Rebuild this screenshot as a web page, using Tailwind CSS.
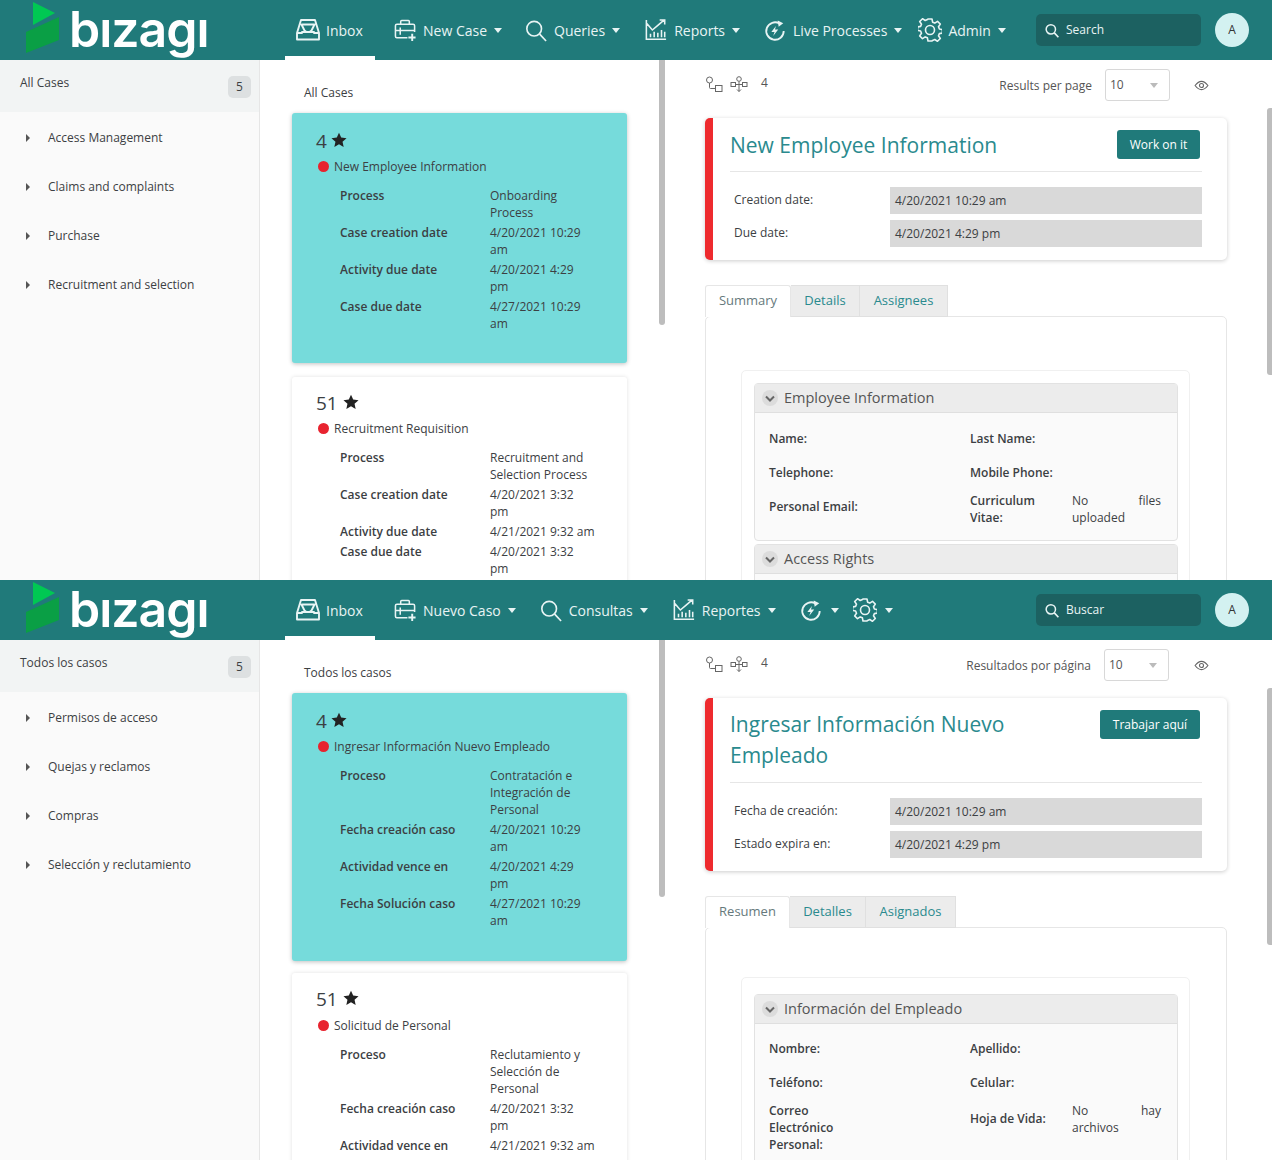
<!DOCTYPE html>
<html lang="en">
<head>
    <meta charset="UTF-8">
    <meta name="viewport" content="width=device-width, initial-scale=1.0">
    <script src="https://cdn.jsdelivr.net/npm/@tailwindcss/browser@4"></script>
    <title>Bizagi Inbox</title>
</head>
<body class="bg-white font-['Open_Sans',sans-serif] text-[12px] text-[#3c4043]">
    <!-- shared icons -->
    <svg class="hidden" xmlns="http://www.w3.org/2000/svg">
        <symbol id="i-inbox" viewBox="0 0 24 24"><path d="M1 15 5 2h14l4 13v6.500H1z M1 15h5l0-1h12v1h5 M5.500 6.500h13l-3 6-2 1.500h-3l-2-1.500z" fill="none" stroke="currentColor" stroke-width="1.900" stroke-linejoin="round"/></symbol>
        <symbol id="i-case" viewBox="0 0 24 24"><path d="M14 20H3q-1.500 0-1.500-1.500V7.500Q1.500 6 3 6h17q1.500 0 1.500 1.500V14 M1.500 12.500h20 M7 6V3q0-1 1-1h7q1 0 1 1v3 M6.500 9.500v7.500" fill="none" stroke="currentColor" stroke-width="1.600"/><path d="M19 16v7.500 M15 19.750h7.500" fill="none" stroke="currentColor" stroke-width="2"/></symbol>
        <symbol id="i-search" viewBox="0 0 24 24"><circle cx="10" cy="10" r="8" fill="none" stroke="currentColor" stroke-width="1.800"/><path d="m16 16 7 7.500" fill="none" stroke="currentColor" stroke-width="1.800"/></symbol>
        <symbol id="i-search-sm" viewBox="0 0 24 24"><circle cx="10" cy="10" r="8" fill="none" stroke="currentColor" stroke-width="2.600"/><path d="m16 16 7 7.500" fill="none" stroke="currentColor" stroke-width="2.800"/></symbol>
        <symbol id="i-chart" viewBox="0 0 24 24"><path d="M1.500 1v21h21.500 M2 5l6 7 6-5 7-6 M16 1h5.500v5 M6 20v-4 M10 20v-6 M14 20v-5 M18 20v-8 M21.500 20v-6" fill="none" stroke="currentColor" stroke-width="1.700"/></symbol>
        <symbol id="i-live" viewBox="0 0 24 24"><path d="M17 4.500a9.500 9.500 0 1 0 4.500 8" fill="none" stroke="currentColor" stroke-width="2"/><path d="m15 1 6 3-5 4z" fill="currentColor"/><path d="M13 7 8 13.500h3.500L10 18l5.500-7H12z" fill="currentColor"/></symbol>
        <symbol id="i-gear" viewBox="0 0 24 24"><path d="M10 1h4l.600 3.200 2.200.900L19.500 3.300l2.800 2.800-1.800 2.700.900 2.200 3 .600v3.400l-3 .600-.900 2.200 1.800 2.700-2.800 2.800-2.700-1.800-2.200.900L14 23h-4l-.600-3.200-2.200-.900-2.700 1.800-2.800-2.800 1.800-2.700-.900-2.200-3-.600v-3.400l3-.600.900-2.200-1.800-2.700 2.800-2.800 2.700 1.800 2.200-.900z" fill="none" stroke="currentColor" stroke-width="1.600" stroke-linejoin="round"/><circle cx="12" cy="12" r="4.500" fill="none" stroke="currentColor" stroke-width="1.600"/></symbol>
        <symbol id="i-caret" viewBox="0 0 8 5"><path d="M0 0h8L4 5z" fill="currentColor"/></symbol>
        <symbol id="i-star" viewBox="0 0 24 24"><path d="m12 1 3.300 7.400 8 .800-6 5.400 1.700 7.900-7-4-7 4 1.700-7.900-6-5.400 8-.800z" fill="currentColor"/></symbol>
        <symbol id="i-flow" viewBox="0 0 18 17"><circle cx="4.500" cy="4" r="3" fill="none" stroke="currentColor"/><path d="M4.500 7v4.500q0 1 1 1H10" fill="none" stroke="currentColor"/><rect x="10.500" y="9.500" width="6.500" height="6" fill="none" stroke="currentColor"/></symbol>
        <symbol id="i-tree" viewBox="0 0 18 17"><circle cx="9" cy="3" r="2.300" fill="none" stroke="currentColor"/><rect x="1" y="6.500" width="4.500" height="4" fill="none" stroke="currentColor"/><rect x="12.500" y="6.500" width="4.500" height="4" fill="none" stroke="currentColor"/><path d="M9 5.500v10 M5.500 8.500h7 M7 13.500l2 2 2-2" fill="none" stroke="currentColor"/></symbol>
        <symbol id="i-eye" viewBox="0 0 16 12"><path d="M1 6q7-9 14 0-7 9-14 0z" fill="none" stroke="currentColor" stroke-width="1.200"/><circle cx="8" cy="6" r="2.200" fill="none" stroke="currentColor" stroke-width="1.200"/></symbol>
        <symbol id="i-logo" viewBox="0 0 36 54"><path d="M8 2 30 13 8 25z" fill="#00c853"/><path d="M34 17v23L1 53V32z" fill="#0a9f45"/></symbol>
        <symbol id="i-chev" viewBox="0 0 16 16"><circle cx="8" cy="8" r="8" fill="#dcdcdc"/><path d="M4 6.500 8 10.500l4-4" fill="none" stroke="#666" stroke-width="2"/></symbol>
    </svg>

    <!-- English -->
    <section class="relative h-[580px] overflow-hidden">
        <header class="h-[60px] bg-[#207a7a] flex items-center text-[#e8f4f4] text-[14px]">
            <div class="w-[285px] h-full flex pl-[25px] items-start">
                <svg class="w-[36px] h-[54px]"><use href="#i-logo"/></svg>
                <span class="ml-[8px] text-white font-['Inter',sans-serif] font-semibold text-[50px] leading-[58px] tracking-[-1px]">bızagı</span>
            </div>
            <a class="w-[90px] h-full flex items-center pl-[11px] gap-[6px] border-b-[4px] border-white pt-[4px]"><svg class="w-[24px] h-[24px]"><use href="#i-inbox"/></svg>Inbox</a>
            <a class="ml-[19px] flex items-center gap-[6px]"><svg class="w-[23px] h-[24px]"><use href="#i-case"/></svg>New Case<svg class="w-[8px] h-[5px] ml-[1px]"><use href="#i-caret"/></svg></a>
            <a class="ml-[23px] flex items-center gap-[7px]"><svg class="w-[22px] h-[23px]"><use href="#i-search"/></svg>Queries<svg class="w-[8px] h-[5px]"><use href="#i-caret"/></svg></a>
            <a class="ml-[25px] flex items-center gap-[7px]"><svg class="w-[22px] h-[24px]"><use href="#i-chart"/></svg>Reports<svg class="w-[8px] h-[5px]"><use href="#i-caret"/></svg></a>
            <a class="ml-[24px] flex items-center gap-[7px]"><svg class="w-[22px] h-[23px]"><use href="#i-live"/></svg>Live Processes<svg class="w-[8px] h-[5px]"><use href="#i-caret"/></svg></a>
            <a class="ml-[16px] flex items-center gap-[6px]"><svg class="w-[24px] h-[24px]"><use href="#i-gear"/></svg>Admin<svg class="w-[8px] h-[5px] ml-[1px]"><use href="#i-caret"/></svg></a>
            <div class="absolute left-[1036px] top-[14px] w-[165px] h-[32px] bg-[#1c6161] rounded-[5px] flex items-center pl-[9px] gap-[7px] text-[12px]"><svg class="w-[14px] h-[15px]"><use href="#i-search-sm"/></svg>Search</div>
            <div class="absolute left-[1215px] top-[13px] w-[34px] h-[34px] rounded-full bg-[#d3f1f1] text-[#333] text-[12px] flex items-center justify-center">A</div>
        </header>
        <div class="flex h-[520px]">
            <aside class="w-[260px] shrink-0 bg-[#fafafa] border-r border-[#e6e6e6]">
                <div class="h-[52px] bg-[#f2f4f4] pl-[20px] pr-[8px] pt-[14px] flex justify-between items-start">
                    <span>All Cases</span>
                    <span class="w-[23px] h-[22px] mt-[2px] rounded-[5px] bg-[#dde0e1] flex items-center justify-center">5</span>
                </div>
                <ul class="pt-[1px]">
                    <li class="h-[49px] flex items-center pl-[26px] gap-[18px]"><span class="w-0 h-0 border-y-[4px] border-y-transparent border-l-[4px] border-l-[#555]"></span>Access Management</li>
                    <li class="h-[49px] flex items-center pl-[26px] gap-[18px]"><span class="w-0 h-0 border-y-[4px] border-y-transparent border-l-[4px] border-l-[#555]"></span>Claims and complaints</li>
                    <li class="h-[49px] flex items-center pl-[26px] gap-[18px]"><span class="w-0 h-0 border-y-[4px] border-y-transparent border-l-[4px] border-l-[#555]"></span>Purchase</li>
                    <li class="h-[49px] flex items-center pl-[26px] gap-[18px]"><span class="w-0 h-0 border-y-[4px] border-y-transparent border-l-[4px] border-l-[#555]"></span>Recruitment and selection</li>
                </ul>
            </aside>
            <main class="relative w-[410px] shrink-0 pl-[32px] pt-[24px]">
                <p class="pl-[12px] h-[29px] leading-[17px]">All Cases</p>
                <article class="w-[335px] h-[250px] bg-[#76dbdb] rounded-[3px] shadow-[0_1px_4px_rgba(0,0,0,0.25)] pl-[24px] pt-[16px]">
                    <div class="flex items-center h-[24px] text-[19px]">4<svg class="w-[16px] h-[16px] ml-[4px] text-[#222] mt-[-2px]"><use href="#i-star"/></svg></div>
                    <div class="flex items-center h-[17px] mt-[5px]"><span class="w-[11px] h-[11px] ml-[2px] rounded-full bg-[#e8232f]"></span><span class="ml-[5px]">New Employee Information</span></div>
                    <dl class="mt-[12px] pl-[24px] grid grid-cols-[150px_1fr] gap-y-[3px] leading-[17px]">
                        <dt class="font-semibold">Process</dt><dd>Onboarding<br>Process</dd>
                        <dt class="font-semibold">Case creation date</dt><dd>4/20/2021 10:29<br>am</dd>
                        <dt class="font-semibold">Activity due date</dt><dd>4/20/2021 4:29<br>pm</dd>
                        <dt class="font-semibold">Case due date</dt><dd>4/27/2021 10:29<br>am</dd>
                    </dl>
                </article>
                <article class="w-[335px] h-[260px] mt-[14px] bg-white rounded-[3px] shadow-[0_0_4px_rgba(0,0,0,0.12)] pl-[24px] pt-[14px]">
                    <div class="flex items-center h-[24px] text-[19px]">51<svg class="w-[16px] h-[16px] ml-[5px] text-[#222] mt-[-2px]"><use href="#i-star"/></svg></div>
                    <div class="flex items-center h-[17px] mt-[5px]"><span class="w-[11px] h-[11px] ml-[2px] rounded-full bg-[#e8232f]"></span><span class="ml-[5px]">Recruitment Requisition</span></div>
                    <dl class="mt-[12px] pl-[24px] grid grid-cols-[150px_1fr] gap-y-[3px] leading-[17px]">
                        <dt class="font-semibold">Process</dt><dd>Recruitment and<br>Selection Process</dd>
                        <dt class="font-semibold">Case creation date</dt><dd>4/20/2021 3:32<br>pm</dd>
                        <dt class="font-semibold">Activity due date</dt><dd>4/21/2021 9:32 am</dd>
                        <dt class="font-semibold">Case due date</dt><dd>4/20/2021 3:32<br>pm</dd>
                    </dl>
                </article>
                <div class="absolute left-[399px] top-0 w-[6px] h-[265px] bg-[#bdbdbd] rounded-b-[3px]"></div>
            </main>
            <div class="relative flex-1 pl-[35px] pt-[9px]">
                <div class="flex items-center h-[32px] w-[522px] text-[#555]">
                    <svg class="w-[18px] h-[17px] mt-[-1px] text-[#666]"><use href="#i-flow"/></svg>
                    <svg class="w-[18px] h-[17px] ml-[7px] mt-[-1px] text-[#666]"><use href="#i-tree"/></svg>
                    <span class="ml-[13px] mt-[-4px]">4</span>
                    <span class="ml-auto mt-[1px]">Results per page</span>
                    <span class="ml-[13px] w-[65px] h-[32px] border border-[#d8d8d8] rounded-[3px] flex items-center justify-between pl-[4px] pr-[10px]">10<svg class="w-[10px] h-[5px] text-[#bbb]"><use href="#i-caret"/></svg></span>
                    <svg class="ml-[24px] w-[15px] h-[11px] mr-[18px] text-[#666]"><use href="#i-eye"/></svg>
                </div>
                <div class="mt-[17px] w-[522px] h-[142px] bg-white rounded-[5px] border-l-[8px] border-[#ee2a2e] shadow-[0_1px_4px_rgba(0,0,0,0.2)] pl-[17px] pr-[25px]">
                    <div class="flex justify-between items-center h-[54px] border-b border-[#e6e6e6]">
                        <h2 class="text-[21px] text-[#2a8a8e] leading-[30px]">New Employee Information</h2>
                        <button class="mr-[2px] w-[83px] h-[29px] bg-[#207a7a] text-white rounded-[3px]">Work on it</button>
                    </div>
                    <div class="mt-[15px] flex items-center h-[27px]"><span class="w-[160px] pl-[4px] mt-[-1px]">Creation date:</span><span class="flex-1 h-full bg-[#d9d9d9] pl-[5px] flex items-center">4/20/2021 10:29 am</span></div>
                    <div class="mt-[6px] flex items-center h-[27px]"><span class="w-[160px] pl-[4px] mt-[-1px]">Due date:</span><span class="flex-1 h-full bg-[#d9d9d9] pl-[5px] flex items-center">4/20/2021 4:29 pm</span></div>
                </div>
                <div class="mt-[25px] flex h-[32px] text-[13px] relative z-10">
                    <span class="w-[86px] pb-[2px] bg-white border border-b-0 border-[#e6e6e6] rounded-t-[3px] flex items-center justify-center text-[#66797c]">Summary</span>
                    <span class="w-[69px] bg-[#ececec] border border-[#e0e0e0] border-l-0 flex items-center justify-center text-[#2a8a8e]">Details</span>
                    <span class="w-[88px] bg-[#ececec] border border-[#e0e0e0] border-l-0 flex items-center justify-center text-[#2a8a8e]">Assignees</span>
                </div>
                <div class="w-[522px] h-[400px] border border-[#e6e6e6] rounded-[5px] mt-[-1px] pl-[35px] pt-[53px]">
                    <div class="w-[449px] h-[300px] border border-[#f0f0f0] rounded-[5px] pl-[12px] pt-[12px]">
                        <div class="w-[424px] rounded-[4px] border border-[#e2e2e2] bg-[#fafafa]">
                            <div class="h-[29px] bg-[#ececec] border-b border-[#dfdfdf] flex items-center pl-[7px] gap-[6px] text-[14.500px] text-[#555]"><svg class="w-[16px] h-[16px]"><use href="#i-chev"/></svg>Employee Information</div>
                            <div class="h-[127px] font-semibold">
                                <dl class="grid grid-cols-[201px_102px_89px] pl-[14px] pt-[17px] auto-rows-[34px] leading-[17px]">
                                    <dt>Name:</dt><dt class="col-span-2">Last Name:</dt>
                                    <dt>Telephone:</dt><dt class="col-span-2">Mobile Phone:</dt>
                                    <dt>Personal Email:</dt><dt class="mt-[-6px]">Curriculum<br>Vitae:</dt><dd class="mt-[-6px] font-normal flex flex-col"><span class="flex justify-between"><span>No</span><span>files</span></span>uploaded</dd>
                                </dl>
                            </div>
                        </div>
                        <div class="w-[424px] mt-[3px] rounded-t-[4px] border border-[#e2e2e2] bg-[#fafafa]">
                            <div class="h-[29px] bg-[#ececec] border-b border-[#dfdfdf] flex items-center pl-[7px] gap-[6px] text-[14.500px] text-[#555]"><svg class="w-[16px] h-[16px]"><use href="#i-chev"/></svg>Access Rights</div>
                            <div class="h-[20px]"></div>
                        </div>
                    </div>
                </div>
                <div class="absolute right-0 top-[48px] w-[5px] h-[267px] bg-[#bdbdbd] rounded-l-[3px]"></div>
            </div>
        </div>
    </section>

    <!-- Spanish -->
    <section class="relative h-[580px] overflow-hidden">
        <header class="h-[60px] bg-[#207a7a] flex items-center text-[#e8f4f4] text-[14px]">
            <div class="w-[285px] h-full flex pl-[25px] items-start">
                <svg class="w-[36px] h-[54px]"><use href="#i-logo"/></svg>
                <span class="ml-[8px] text-white font-['Inter',sans-serif] font-semibold text-[50px] leading-[58px] tracking-[-1px]">bızagı</span>
            </div>
            <a class="w-[90px] h-full flex items-center pl-[11px] gap-[6px] border-b-[4px] border-white pt-[4px]"><svg class="w-[24px] h-[24px]"><use href="#i-inbox"/></svg>Inbox</a>
            <a class="ml-[19px] flex items-center gap-[6px]"><svg class="w-[23px] h-[24px]"><use href="#i-case"/></svg>Nuevo Caso<svg class="w-[8px] h-[5px] ml-[1px]"><use href="#i-caret"/></svg></a>
            <a class="ml-[24px] flex items-center gap-[7px]"><svg class="w-[22px] h-[23px]"><use href="#i-search"/></svg>Consultas<svg class="w-[8px] h-[5px]"><use href="#i-caret"/></svg></a>
            <a class="ml-[25px] flex items-center gap-[7px]"><svg class="w-[22px] h-[24px]"><use href="#i-chart"/></svg>Reportes<svg class="w-[8px] h-[5px]"><use href="#i-caret"/></svg></a>
            <a class="ml-[24px] flex items-center gap-[9px]"><svg class="w-[22px] h-[23px]"><use href="#i-live"/></svg><svg class="w-[8px] h-[5px]"><use href="#i-caret"/></svg></a>
            <a class="ml-[14px] flex items-center gap-[8px]"><svg class="w-[24px] h-[24px]"><use href="#i-gear"/></svg><svg class="w-[8px] h-[5px]"><use href="#i-caret"/></svg></a>
            <div class="absolute left-[1036px] top-[14px] w-[165px] h-[32px] bg-[#1c6161] rounded-[5px] flex items-center pl-[9px] gap-[7px] text-[12px]"><svg class="w-[14px] h-[15px]"><use href="#i-search-sm"/></svg>Buscar</div>
            <div class="absolute left-[1215px] top-[13px] w-[34px] h-[34px] rounded-full bg-[#d3f1f1] text-[#333] text-[12px] flex items-center justify-center">A</div>
        </header>
        <div class="flex h-[520px]">
            <aside class="w-[260px] shrink-0 bg-[#fafafa] border-r border-[#e6e6e6]">
                <div class="h-[52px] bg-[#f2f4f4] pl-[20px] pr-[8px] pt-[14px] flex justify-between items-start">
                    <span>Todos los casos</span>
                    <span class="w-[23px] h-[22px] mt-[2px] rounded-[5px] bg-[#dde0e1] flex items-center justify-center">5</span>
                </div>
                <ul class="pt-[1px]">
                    <li class="h-[49px] flex items-center pl-[26px] gap-[18px]"><span class="w-0 h-0 border-y-[4px] border-y-transparent border-l-[4px] border-l-[#555]"></span>Permisos de acceso</li>
                    <li class="h-[49px] flex items-center pl-[26px] gap-[18px]"><span class="w-0 h-0 border-y-[4px] border-y-transparent border-l-[4px] border-l-[#555]"></span>Quejas y reclamos</li>
                    <li class="h-[49px] flex items-center pl-[26px] gap-[18px]"><span class="w-0 h-0 border-y-[4px] border-y-transparent border-l-[4px] border-l-[#555]"></span>Compras</li>
                    <li class="h-[49px] flex items-center pl-[26px] gap-[18px]"><span class="w-0 h-0 border-y-[4px] border-y-transparent border-l-[4px] border-l-[#555]"></span>Selección y reclutamiento</li>
                </ul>
            </aside>
            <main class="relative w-[410px] shrink-0 pl-[32px] pt-[24px]">
                <p class="pl-[12px] h-[29px] leading-[17px]">Todos los casos</p>
                <article class="w-[335px] h-[268px] bg-[#76dbdb] rounded-[3px] shadow-[0_1px_4px_rgba(0,0,0,0.25)] pl-[24px] pt-[16px]">
                    <div class="flex items-center h-[24px] text-[19px]">4<svg class="w-[16px] h-[16px] ml-[4px] text-[#222] mt-[-2px]"><use href="#i-star"/></svg></div>
                    <div class="flex items-center h-[17px] mt-[5px]"><span class="w-[11px] h-[11px] ml-[2px] rounded-full bg-[#e8232f]"></span><span class="ml-[5px]">Ingresar Información Nuevo Empleado</span></div>
                    <dl class="mt-[12px] pl-[24px] grid grid-cols-[150px_1fr] gap-y-[3px] leading-[17px]">
                        <dt class="font-semibold">Proceso</dt><dd>Contratación e<br>Integración de<br>Personal</dd>
                        <dt class="font-semibold">Fecha creación caso</dt><dd>4/20/2021 10:29<br>am</dd>
                        <dt class="font-semibold">Actividad vence en</dt><dd>4/20/2021 4:29<br>pm</dd>
                        <dt class="font-semibold">Fecha Solución caso</dt><dd>4/27/2021 10:29<br>am</dd>
                    </dl>
                </article>
                <article class="w-[335px] h-[260px] mt-[12px] bg-white rounded-[3px] shadow-[0_0_4px_rgba(0,0,0,0.12)] pl-[24px] pt-[14px]">
                    <div class="flex items-center h-[24px] text-[19px]">51<svg class="w-[16px] h-[16px] ml-[5px] text-[#222] mt-[-2px]"><use href="#i-star"/></svg></div>
                    <div class="flex items-center h-[17px] mt-[6px]"><span class="w-[11px] h-[11px] ml-[2px] rounded-full bg-[#e8232f]"></span><span class="ml-[5px]">Solicitud de Personal</span></div>
                    <dl class="mt-[12px] pl-[24px] grid grid-cols-[150px_1fr] gap-y-[3px] leading-[17px]">
                        <dt class="font-semibold">Proceso</dt><dd>Reclutamiento y<br>Selección de<br>Personal</dd>
                        <dt class="font-semibold">Fecha creación caso</dt><dd>4/20/2021 3:32<br>pm</dd>
                        <dt class="font-semibold">Actividad vence en</dt><dd>4/21/2021 9:32 am</dd>
                    </dl>
                </article>
                <div class="absolute left-[399px] top-0 w-[6px] h-[257px] bg-[#bdbdbd] rounded-b-[3px]"></div>
            </main>
            <div class="relative flex-1 pl-[35px] pt-[9px]">
                <div class="flex items-center h-[32px] w-[522px] text-[#555]">
                    <svg class="w-[18px] h-[17px] mt-[-1px] text-[#666]"><use href="#i-flow"/></svg>
                    <svg class="w-[18px] h-[17px] ml-[7px] mt-[-1px] text-[#666]"><use href="#i-tree"/></svg>
                    <span class="ml-[13px] mt-[-4px]">4</span>
                    <span class="ml-auto mt-[1px]">Resultados por página</span>
                    <span class="ml-[13px] w-[65px] h-[32px] border border-[#d8d8d8] rounded-[3px] flex items-center justify-between pl-[4px] pr-[10px]">10<svg class="w-[10px] h-[5px] text-[#bbb]"><use href="#i-caret"/></svg></span>
                    <svg class="ml-[25px] w-[15px] h-[11px] mr-[18px] text-[#666]"><use href="#i-eye"/></svg>
                </div>
                <div class="mt-[17px] w-[522px] h-[173px] bg-white rounded-[5px] border-l-[8px] border-[#ee2a2e] shadow-[0_1px_4px_rgba(0,0,0,0.2)] pl-[17px] pr-[25px]">
                    <div class="flex justify-between items-start h-[85px] pt-[12px] border-b border-[#e6e6e6]">
                        <h2 class="text-[21px] text-[#2a8a8e] leading-[31px] w-[320px] mt-[-1px]">Ingresar Información Nuevo Empleado</h2>
                        <button class="mr-[2px] w-[100px] h-[29px] bg-[#207a7a] text-white rounded-[3px]">Trabajar aquí</button>
                    </div>
                    <div class="mt-[15px] flex items-center h-[27px]"><span class="w-[160px] pl-[4px] mt-[-1px]">Fecha de creación:</span><span class="flex-1 h-full bg-[#d9d9d9] pl-[5px] flex items-center">4/20/2021 10:29 am</span></div>
                    <div class="mt-[6px] flex items-center h-[27px]"><span class="w-[160px] pl-[4px] mt-[-1px]">Estado expira en:</span><span class="flex-1 h-full bg-[#d9d9d9] pl-[5px] flex items-center">4/20/2021 4:29 pm</span></div>
                </div>
                <div class="mt-[25px] flex h-[32px] text-[13px] relative z-10">
                    <span class="w-[85px] pb-[2px] bg-white border border-b-0 border-[#e6e6e6] rounded-t-[3px] flex items-center justify-center text-[#66797c]">Resumen</span>
                    <span class="w-[76px] bg-[#ececec] border border-[#e0e0e0] border-l-0 flex items-center justify-center text-[#2a8a8e]">Detalles</span>
                    <span class="w-[90px] bg-[#ececec] border border-[#e0e0e0] border-l-0 flex items-center justify-center text-[#2a8a8e]">Asignados</span>
                </div>
                <div class="w-[522px] h-[400px] border border-[#e6e6e6] rounded-[5px] mt-[-1px] pl-[35px] pt-[49px]">
                    <div class="w-[449px] h-[300px] border border-[#f0f0f0] rounded-[5px] pl-[12px] pt-[16px]">
                        <div class="w-[424px] rounded-[4px] border border-[#e2e2e2] bg-[#fafafa]">
                            <div class="h-[29px] bg-[#ececec] border-b border-[#dfdfdf] flex items-center pl-[7px] gap-[6px] text-[14.500px] text-[#555]"><svg class="w-[16px] h-[16px]"><use href="#i-chev"/></svg>Información del Empleado</div>
                            <div class="h-[160px] font-semibold">
                                <dl class="grid grid-cols-[201px_102px_89px] pl-[14px] pt-[16px] auto-rows-[34px] leading-[17px]">
                                    <dt>Nombre:</dt><dt class="col-span-2">Apellido:</dt>
                                    <dt>Teléfono:</dt><dt class="col-span-2">Celular:</dt>
                                    <dt class="mt-[-6px]">Correo<br>Electrónico<br>Personal:</dt><dt class="mt-[2px]">Hoja de Vida:</dt><dd class="mt-[-6px] font-normal flex flex-col"><span class="flex justify-between"><span>No</span><span>hay</span></span>archivos</dd>
                                </dl>
                            </div>
                        </div>
                    </div>
                </div>
                <div class="absolute right-0 top-[48px] w-[5px] h-[257px] bg-[#bdbdbd] rounded-l-[3px]"></div>
            </div>
        </div>
    </section>
</body>
</html>
